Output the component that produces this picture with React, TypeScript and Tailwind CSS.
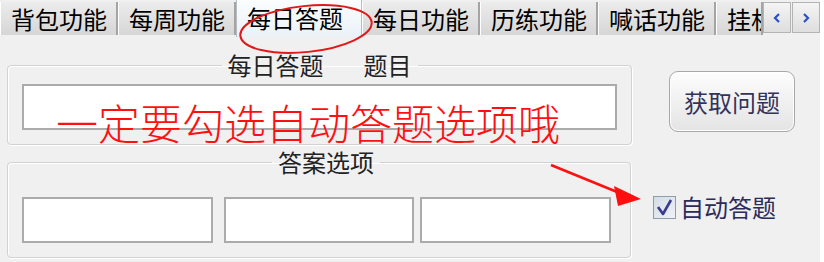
const tabs = [
  { label: "背包功能", w: "w-[118px]" },
  { label: "每周功能", w: "w-[118px]" },
  { label: "每日答题", w: "w-[126px]", active: true },
  { label: "每日功能", w: "w-[118px]" },
  { label: "历练功能", w: "w-[118px]" },
  { label: "喊话功能", w: "w-[118px]" },
  { label: "挂机", w: "w-[47px]", clipped: true },
];

function TabBar() {
  return (
    <div className="flex h-[37px] items-start bg-[#f0f0f0]">
      {tabs.map((t) =>
        t.active ? (
          <div
            key={t.label}
            className={`${t.w} flex h-[37px] shrink-0 items-center whitespace-nowrap border-x border-[#b8bcc0] bg-gradient-to-b from-[#fbfdfe] to-[#eaf2f8] pb-[2px] pl-[10px] text-[24px] leading-[28px] text-black`}
          >
            {t.label}
          </div>
        ) : (
          <div
            key={t.label}
            className={`${t.w} ${t.clipped ? "overflow-hidden" : ""} mt-[2px] flex h-[33px] shrink-0 items-center whitespace-nowrap border-r-2 border-r-[#a4a4a4] bg-gradient-to-b from-[#ececec] to-[#d6d6d6] pl-[11px] text-[24px] leading-[28px] text-black shadow-[inset_1px_0_0_#fff]`}
          >
            {t.label}
          </div>
        )
      )}
      <div className="mt-[2px] flex gap-[1px]">
        <ArrowBtn dir="left" />
        <ArrowBtn dir="right" />
      </div>
    </div>
  );
}

function ArrowBtn({ dir }: { dir: "left" | "right" }) {
  return (
    <div className="flex h-[31px] w-[28px] items-center justify-center border border-[#b4b4b4] bg-gradient-to-b from-[#f4f4f4] to-[#dedede]">
      <svg width="8" height="10" viewBox="0 0 8 10">
        <path
          d={dir === "left" ? "M6 1 L2 5 L6 9" : "M2 1 L6 5 L2 9"}
          fill="none"
          stroke="#2a50c8"
          strokeWidth="2.2"
        />
      </svg>
    </div>
  );
}

function TextBox({ className }: { className: string }) {
  return <div className={`h-[46px] border-2 border-[#ababab] bg-white ${className}`} />;
}

export default function App() {
  return (
    <div className="relative h-[262px] w-[824px] overflow-hidden bg-white font-['Noto_Sans_CJK_SC',sans-serif]">
      <div className="h-[262px] w-[820px] bg-[#f0f0f0]">
        <TabBar />
        <div className="flex">
          <div className="flex w-[631px] flex-col pl-[7px] pt-[15px]">
            <fieldset className="rounded-[4px] border border-[#d2d2d2] px-[14px] pb-[14px] pt-[6px] shadow-[inset_1px_1px_0_#fff,1px_1px_0_#fff]">
              <legend className="mx-auto px-[6px] text-[24px] leading-[26px] text-[#222]">
                每日答题<span className="inline-block w-[40px]" />题目
              </legend>
              <TextBox className="w-[595px]" />
            </fieldset>
            <fieldset className="mt-[4px] rounded-[4px] border border-[#d2d2d2] pb-[14px] pl-[14px] pt-[22px] shadow-[inset_1px_1px_0_#fff,1px_1px_0_#fff]">
              <legend className="mx-auto px-[6px] text-[24px] leading-[26px] text-[#222]">
                答案选项
              </legend>
              <div className="flex">
                <TextBox className="w-[191px]" />
                <TextBox className="ml-[11px] w-[190px]" />
                <TextBox className="ml-[6px] w-[191px]" />
              </div>
            </fieldset>
          </div>
          <div className="flex flex-col">
            <button className="ml-[38px] mt-[34px] flex h-[61px] w-[126px] items-center justify-center rounded-[9px] border border-[#a8a8a8] bg-gradient-to-b from-[#fdfdfd] to-[#e4e4e4] text-[24px] leading-none text-[#33335a] shadow-[inset_0_0_0_1px_#fff]">
              获取问题
            </button>
            <label className="ml-[22px] mt-[61px] flex items-center gap-[4px] text-[24px] leading-[28px] text-[#2c2c5a]">
              <span className="flex h-[23px] w-[23px] items-center justify-center border border-[#8e9cb0] bg-gradient-to-br from-[#d4dce6] to-[#eef2f6]">
                <svg width="17" height="17" viewBox="0 0 17 17">
                  <path
                    d="M2 8 L7 15 L15 1"
                    fill="none"
                    stroke="#3b3b8e"
                    strokeWidth="2.6"
                    strokeLinejoin="round"
                  />
                </svg>
              </span>
              自动答题
            </label>
          </div>
        </div>
      </div>

      <div className="pointer-events-none absolute left-[56px] top-[102px] whitespace-nowrap text-[42px] font-light leading-[40px] text-[#ff1010]">
        一定要勾选自动答题选项哦
      </div>

      <svg
        className="pointer-events-none absolute left-0 top-0"
        width="824"
        height="262"
        viewBox="0 0 824 262"
      >
        <ellipse
          cx="306"
          cy="29"
          rx="66"
          ry="23"
          transform="rotate(-6 306 29)"
          fill="none"
          stroke="#e01818"
          strokeWidth="2"
        />
        <line x1="551" y1="165" x2="622" y2="194" stroke="#ff1010" strokeWidth="2.5" />
        <polygon points="641,199 614,186 618,206" fill="#ff1010" />
      </svg>
    </div>
  );
}
